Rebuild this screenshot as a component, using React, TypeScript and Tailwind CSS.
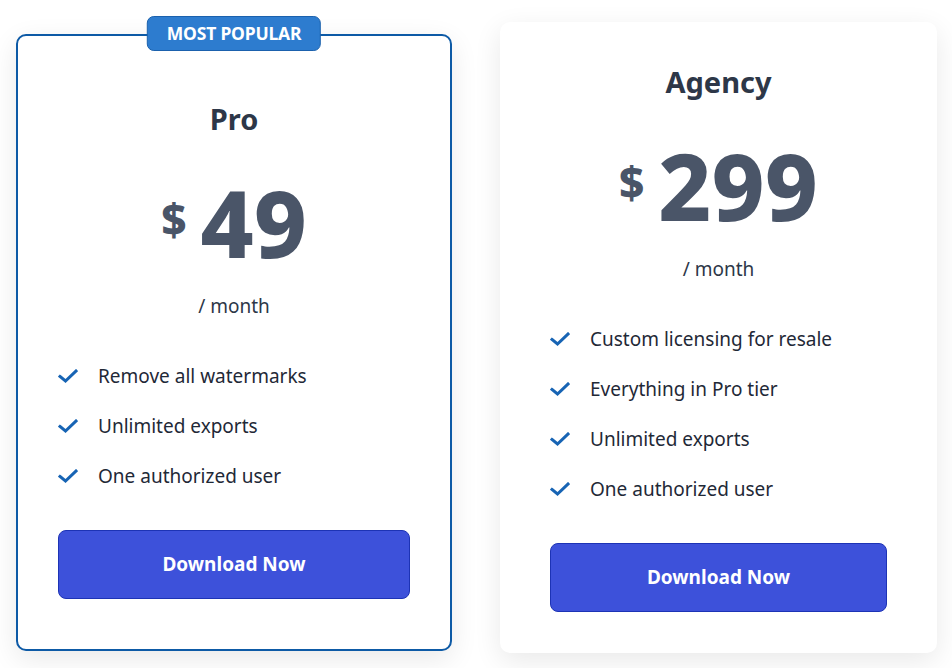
import React from "react";

const Check = () => (
  <svg width="20" height="14" viewBox="0 0 20 14" className="shrink-0" aria-hidden="true">
    <path d="M2 7.5 L7.5 12 L18 2" fill="none" stroke="#1764b4" strokeWidth="3" strokeLinecap="square" strokeLinejoin="miter" />
  </svg>
);

type CardProps = {
  title: string;
  price: string;
  features: string[];
};

const CardBody = ({ title, price, features }: CardProps) => (
  <div className="flex flex-col">
    <h2 className="text-center text-[29px] leading-[40px] font-bold text-[#2d3748]">{title}</h2>
    <div className="mt-[34px] flex justify-center items-start h-[100px]">
      <span className="text-[44px] leading-[44px] font-extrabold text-[#4a5568] mt-[24px] mr-[14px]">$</span>
      <span className="text-[92px] leading-[100px] font-extrabold text-[#4a5568]">{price}</span>
    </div>
    <div className="mt-[19px] text-center text-[19px] leading-[28px] text-[#2d3748]">/ month</div>
    <ul className="mt-[42px] flex flex-col gap-[22px]">
      {features.map((f) => (
        <li key={f} className="flex items-center gap-[20px] h-[28px] text-[19px] leading-[28px] text-[#1f2937]">
          <Check />
          <span>{f}</span>
        </li>
      ))}
    </ul>
    <button className="mt-[40px] h-[69px] w-full rounded-[8px] border border-[#1d33b5] bg-[#3d51da] text-white text-[19px] font-bold">
      Download Now
    </button>
  </div>
);

export default function App() {
  return (
    <div
      className="w-[952px] h-[668px] bg-white flex items-start pl-[16px] overflow-hidden"
      style={{ fontFamily: '"Noto Sans", "Open Sans", sans-serif' }}
    >
      <div className="relative mt-[34px] w-[436px] rounded-[10px] border-2 border-[#0d5aa6] bg-white px-[40px] pt-[63px] pb-[50px] shadow-[0_8px_28px_rgba(0,0,0,0.09)]">
        <div className="absolute left-1/2 -translate-x-1/2 -top-[20px] h-[35px] px-[19px] flex items-center rounded-[7px] border border-[#1b61ad] bg-[#2d7ccf] text-white text-[17.5px] font-bold tracking-[-0.2px] whitespace-nowrap">
          MOST POPULAR
        </div>
        <CardBody
          title="Pro"
          price="49"
          features={["Remove all watermarks", "Unlimited exports", "One authorized user"]}
        />
      </div>
      <div className="ml-[48px] mt-[22px] w-[437px] rounded-[10px] bg-white px-[50px] pt-[40px] pb-[41px] shadow-[0_8px_28px_rgba(0,0,0,0.09)]">
        <CardBody
          title="Agency"
          price="299"
          features={[
            "Custom licensing for resale",
            "Everything in Pro tier",
            "Unlimited exports",
            "One authorized user",
          ]}
        />
      </div>
    </div>
  );
}
